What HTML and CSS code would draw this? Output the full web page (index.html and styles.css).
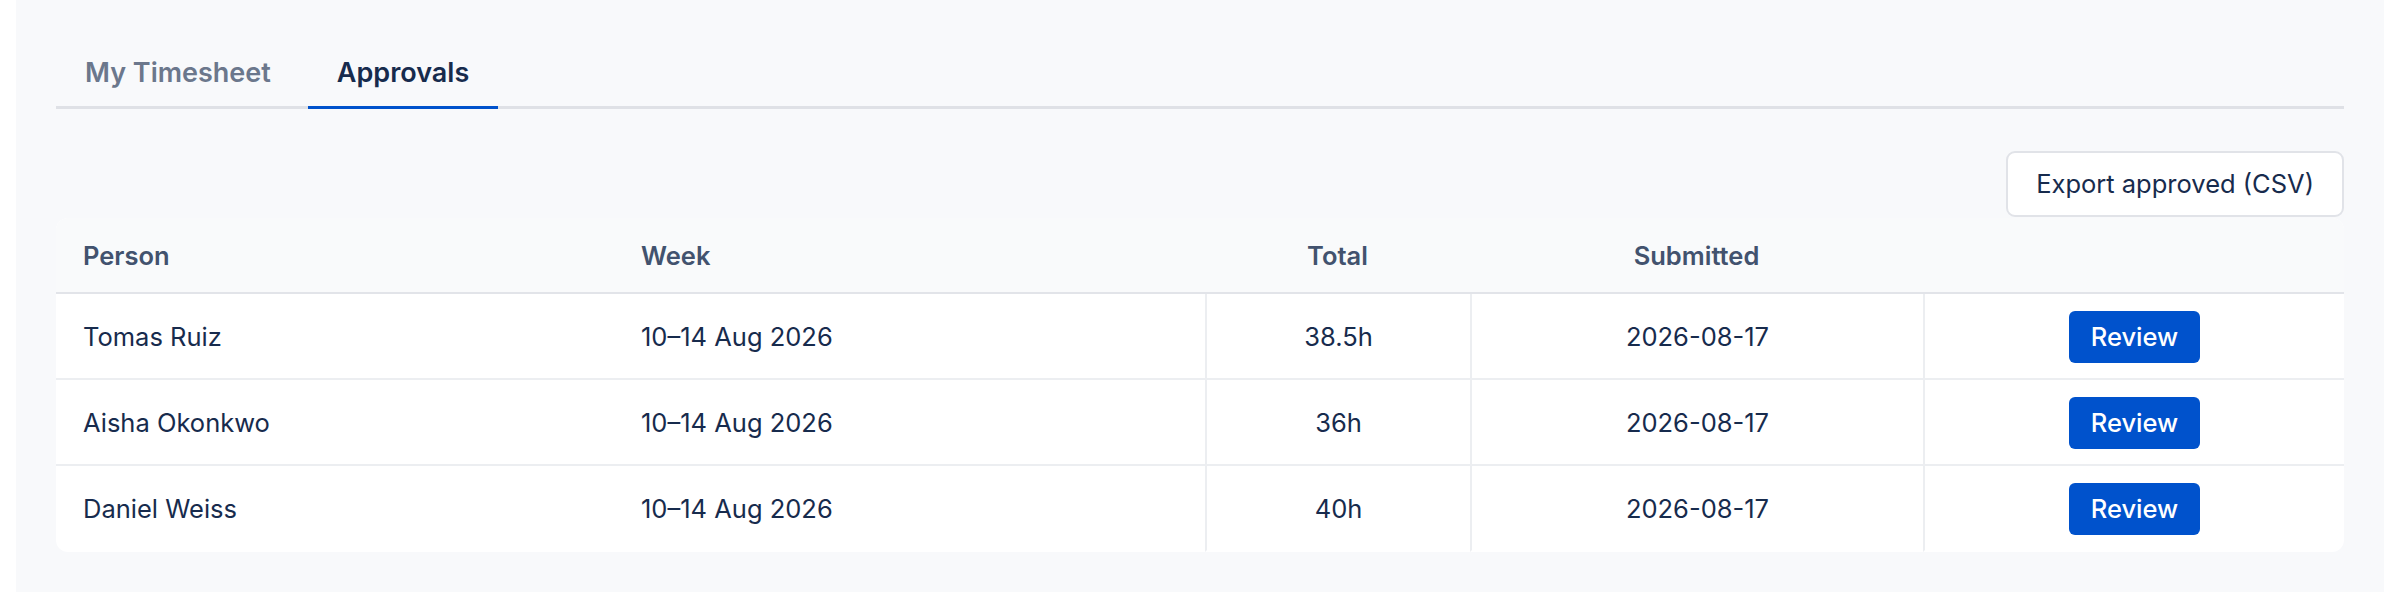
FILE: index.html
```html
<!DOCTYPE html>
<html lang="en">
<head>
<meta charset="utf-8">
<title>Approvals</title>
<link rel="stylesheet" href="styles.css">
</head>
<body>
<main class="panel">
  <nav class="tabs">
    <button class="tab">My Timesheet</button>
    <button class="tab tab-active">Approvals</button>
  </nav>
  <div class="toolbar">
    <button class="btn-export">Export approved (CSV)</button>
  </div>
  <div class="card">
    <table class="grid">
      <colgroup>
        <col class="c-person">
        <col class="c-week">
        <col class="c-total">
        <col class="c-sub">
        <col class="c-act">
      </colgroup>
      <thead>
        <tr>
          <th class="left">Person</th>
          <th class="left">Week</th>
          <th class="center">Total</th>
          <th class="center">Submitted</th>
          <th></th>
        </tr>
      </thead>
      <tbody>
        <tr>
          <td>Tomas Ruiz</td>
          <td>10–14 Aug 2026</td>
          <td class="center sep">38.5h</td>
          <td class="center sep">2026-08-17</td>
          <td class="center sep"><button class="btn-review">Review</button></td>
        </tr>
        <tr>
          <td>Aisha Okonkwo</td>
          <td>10–14 Aug 2026</td>
          <td class="center sep">36h</td>
          <td class="center sep">2026-08-17</td>
          <td class="center sep"><button class="btn-review">Review</button></td>
        </tr>
        <tr>
          <td>Daniel Weiss</td>
          <td>10–14 Aug 2026</td>
          <td class="center sep">40h</td>
          <td class="center sep">2026-08-17</td>
          <td class="center sep"><button class="btn-review">Review</button></td>
        </tr>
      </tbody>
    </table>
  </div>
</main>
</body>
</html>
```

FILE: styles.css
```css
* { box-sizing: border-box; }

html, body {
  margin: 0;
  padding: 0;
  background: #ffffff;
}

body {
  margin: 0 16px;
  font-family: Inter, "Noto Sans", "Liberation Sans", sans-serif;
  color: #172b4d;
  font-size: 25.5px;
  line-height: 36px;
}

.panel {
  background: #f8f9fb;
  padding: 40px 40px 60px;
  min-height: 592px;
}

.tabs {
  display: flex;
  gap: 8px;
  border-bottom: 3px solid #dfe1e6;
}

.tab {
  font: inherit;
  font-size: 27px;
  line-height: 36px;
  font-weight: 600;
  color: #6b778c;
  background: none;
  border: 0;
  border-bottom: 3px solid transparent;
  margin-bottom: -3px;
  padding: 15px 29px 15px;
  cursor: pointer;
}

.tab-active {
  color: #172b4d;
  border-bottom-color: #0052cc;
}

.toolbar {
  display: flex;
  justify-content: flex-end;
  margin-top: 42px;
  margin-bottom: 1px;
}

.btn-export {
  font: inherit;
  font-size: 25.5px;
  line-height: 36px;
  color: #172b4d;
  background: #ffffff;
  border: 2px solid #e1e3e8;
  border-radius: 9px;
  padding: 13px 28px;
  cursor: pointer;
}

.card {
  background: #ffffff;
  border-radius: 12px;
  overflow: hidden;
}

.grid {
  width: 100%;
  table-layout: fixed;
  border-collapse: separate;
  border-spacing: 0;
}

.c-person { width: 558px; }
.c-week { width: 591px; }
.c-total { width: 265px; }
.c-sub { width: 453px; }
.c-act { width: 421px; }

.grid th {
  background: #f9fafb;
  color: #42526e;
  font-weight: 600;
  padding: 20px 27px 18px;
  border-bottom: 2px solid #e2e4e9;
  text-align: left;
}

.grid td {
  padding: 17px 27px 15px;
  height: 86px;
  border-bottom: 2px solid #eceef1;
  vertical-align: middle;
  white-space: nowrap;
}

.grid tbody tr:last-child td {
  border-bottom-color: transparent;
}

.grid .center { text-align: center; }
.grid .left { text-align: left; }

.grid td.sep {
  border-left: 2px solid #eceef1;
}

.btn-review {
  font: inherit;
  font-size: 25.5px;
  font-weight: 500;
  line-height: 52px;
  height: 52px;
  color: #ffffff;
  background: #0052cc;
  border: 0;
  border-radius: 6px;
  padding: 0 22px;
  cursor: pointer;
  vertical-align: middle;
}
```
